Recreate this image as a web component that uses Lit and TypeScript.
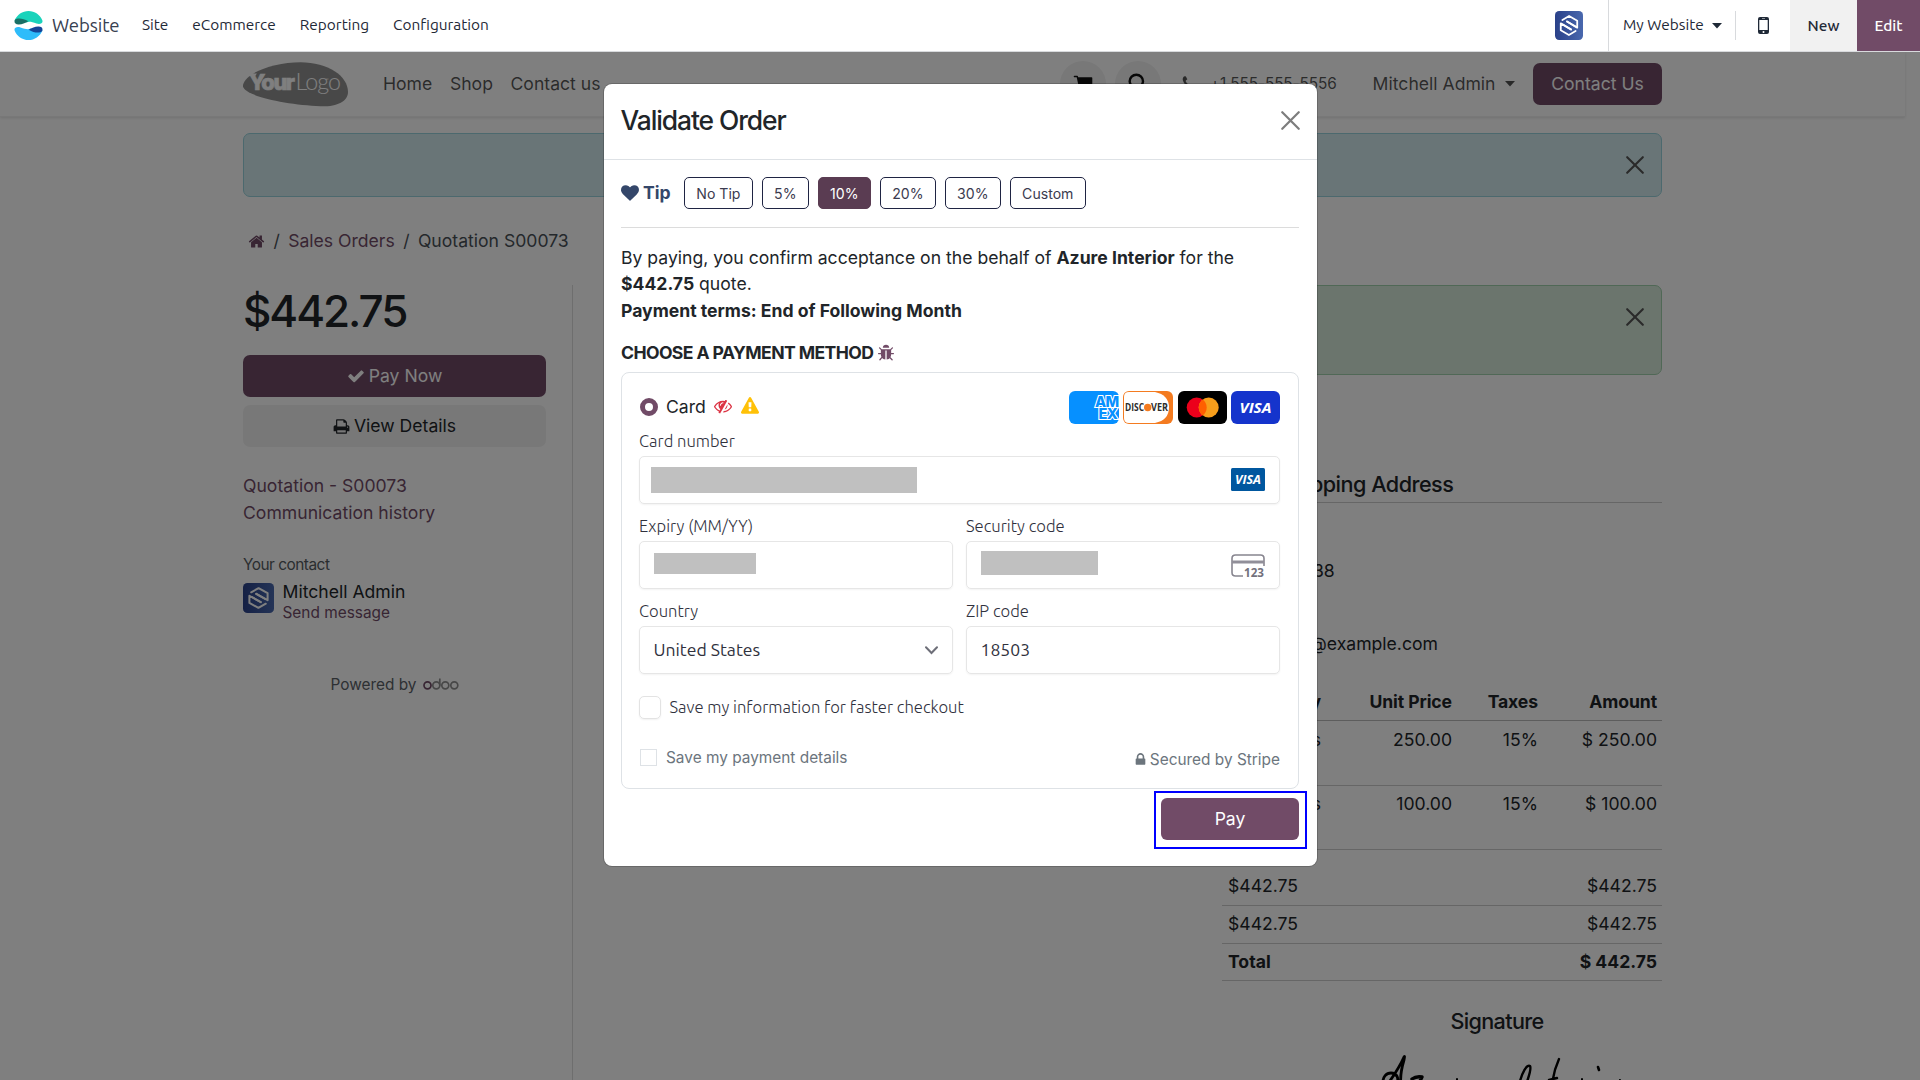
import { LitElement, html, css } from "lit";
import { customElement } from "lit/decorators.js";
import { classMap } from "lit/directives/class-map.js";

const GLYPHS: Record<string, string> = {
  home: "M1472 992v480q0 26-19 45t-45 19h-384v-384h-256v384h-384q-26 0-45-19t-19-45v-480q0-1 .5-3t.5-3l575-474 575 474q1 2 1 6zm223-69l-62 74q-8 9-21 11h-3q-13 0-21-7l-692-577-692 577q-12 8-24 7-13-2-21-11l-62-74q-8-10-7-23.5t11-21.5l719-599q32-26 76-26t76 26l244 204v-195q0-14 9-23t23-9h192q14 0 23 9t9 23v408l219 182q10 8 11 21.5t-7 23.5z",
  check: "M1671 566q0 40-28 68l-724 724-136 136q-28 28-68 28t-68-28l-136-136-362-362q-28-28-28-68t28-68l136-136q28-28 68-28t68 28l294 295 656-657q28-28 68-28t68 28l136 136q28 28 28 68z",
  heart: "M896 1664q-26 0-44-18l-624-602q-10-8-27.5-26t-55.5-65.5-68-97.5-53.5-121-23.5-138q0-220 127-344t351-124q62 0 126.5 21.5t120 58 95.5 68.5 76 68q36-36 76-68t95.5-68.5 120-58 126.5-21.5q224 0 351 124t127 344q0 221-229 450l-623 600q-18 18-44 18z",
  print: "M448 1536h896v-256h-896v256zm0-640h896v-384h-160q-40 0-68-28t-28-68v-160h-640v640zm1152 64q0-26-19-45t-45-19-45 19-19 45 19 45 45 19 45-19 19-45zm128 0v416q0 13-9.5 22.5t-22.5 9.5h-224v160q0 40-28 68t-68 28h-960q-40 0-68-28t-28-68v-160h-224q-13 0-22.5-9.5t-9.5-22.5v-416q0-79 56.5-135.5t135.5-56.5h64v-544q0-40 28-68t68-28h672q40 0 88 20t76 48l152 152q28 28 48 76t20 88v256h64q79 0 135.5 56.5t56.5 135.5z",
  lock: "M640 768h512v-192q0-106-75-181t-181-75-181 75-75 181v192zm832 96v576q0 40-28 68t-68 28h-960q-40 0-68-28t-28-68v-576q0-40 28-68t68-28h32v-192q0-184 132-316t316-132 316 132 132 316v192h32q40 0 68 28t28 68z",
  warning: "M1024 1375v-190q0-14-9.5-23.5t-22.5-9.5h-192q-13 0-22.5 9.5t-9.5 23.5v190q0 14 9.5 23.5t22.5 9.5h192q13 0 22.5-9.5t9.5-23.5zm-2-374l18-459q0-12-10-19-13-11-24-11h-220q-11 0-24 11-10 7-10 21l17 457q0 10 10 16.5t24 6.5h185q14 0 23.5-6.5t10.5-16.5zm-14-934l768 1408q35 63-2 126-17 29-46.5 46t-63.5 17h-1536q-34 0-63.5-17t-46.5-46q-37-63-2-126l768-1408q17-31 47-49t65-18 65 18 47 49z",
  unseen: "M555 1335l78-141q-87-63-136-159t-49-203q0-121 61-225-229 117-381 353 167 258 427 375zm389-759q0-20-14-34t-34-14q-125 0-214.5 89.5t-89.5 214.5q0 20 14 34t34 14 34-14 14-34q0-86 61-147t147-61q20 0 34-14t14-34zm363-191q0 7-1 9-106 189-316 567t-315 566l-49 89q-10 16-28 16-12 0-134-70-16-10-16-28 0-12 44-87-143-65-263.5-173t-208.5-245q-20-31-20-69t20-69q153-235 380-371t496-136q89 0 180 17l54-97q10-16 28-16 5 0 18 6t31 15.5 33 18.5 31.5 18.5 19.5 11.5q16 10 16 27zm37 447q0 139-79 253.5t-209 164.5l280-502q8 45 8 84zm448 128q0 35-20 69-39 64-109 145-150 172-347.5 267t-419.5 95l74-132q212-18 392.5-137t301.5-307q-115-179-282-294l63-112q95 64 182.5 153t144.5 184q20 34 20 69z",
  bug: "M1696 960q0 26-19 45t-45 19h-224q0 171-67 290l208 209q19 19 19 45t-19 45q-18 19-45 19t-45-19l-198-197q-5 5-15 13t-42 28.5-65 36.5-82 29-97 13v-896h-128v896q-51 0-101.5-13.5t-87-33-66-39-43.5-32.5l-15-14-183 207q-20 21-48 21-24 0-43-16-19-18-20.5-44.5t15.5-46.5l202-227q-58-114-58-274h-224q-26 0-45-19t-19-45 19-45 45-19h224v-294l-173-173q-19-19-19-45t19-45 45-19 45 19l173 173h844l173-173q19-19 45-19t45 19 19 45-19 45l-173 173v294h224q26 0 45 19t19 45zm-480-576h-640q0-133 93.5-226.5t226.5-93.5 226.5 93.5 93.5 226.5z",
  cart: "M1728 448v512q0 24-16.5 42.5t-40.5 21.5l-1044 122q13 60 13 70 0 16-24 64h920q26 0 45 19t19 45-19 45-45 19h-1024q-26 0-45-19t-19-45q0-11 8-31.5t16-36 21.5-40 15.5-29.5l-177-823h-204q-26 0-45-19t-19-45 19-45 45-19h256q16 0 28.5 6.5t19.5 15.5 13 24.5 8 26 5.5 29.5 4.5 26h1201q26 0 45 19t19 45z",
  phone: "M1600 1240q0 27-10 70.5t-21 68.5q-21 50-122 106-94 51-186 51-27 0-53-3.5t-57.5-12.5-47-14.5-55.5-20.5-49-18q-98-35-175-83-127-79-264-216t-216-264q-48-77-83-175-3-9-18-49t-20.5-55.5-14.5-47-12.5-57.5-3.5-53q0-92 51-186 56-101 106-122 25-11 68.5-21t70.5-10q14 0 21 3 18 6 53 76 11 19 30 54t35 63.5 31 53.5q3 4 17.5 25t21.5 35.5 7 28.5q0 20-28.5 50t-62 55-62 53-28.5 46q0 9 5 22.5t8.5 20.5 14 24 11.5 19q76 137 174 235t235 174q2 1 19 11.5t24 14 20.5 8.5 22.5 5q18 0 46-28.5t53-62 55-62 50-28.5q14 0 28.5 7t35.5 21.5 25 17.5q25 15 53.5 31t63.5 35 54 30q70 35 76 53 3 7 3 21z",
};

const glyph = (name: string, size: number) => html`<svg class="ico" width=${size} height=${size} viewBox="0 0 1792 1792"><path fill="currentColor" d=${GLYPHS[name]} /></svg>`;

const cross = (size: number) => html`<svg class="ico" width=${size} height=${size} viewBox="0 0 18 18"><path d="M1.2 1.2l15.6 15.6M16.8 1.2L1.2 16.8" fill="none" stroke="currentColor" stroke-width="2.1" stroke-linecap="round" /></svg>`;

const caret = html`<svg class="ico" width="10" height="6" viewBox="0 0 10 6"><path d="M0 0h10L5 5.6z" fill="currentColor" /></svg>`;

const companyMark = (w: number, h: number) => html`<svg class="ico" width=${w} height=${h} viewBox="0 0 31 31" preserveAspectRatio="none">
  <defs><linearGradient id="mk" x1="0" y1="0" x2="1" y2="0"><stop offset="0" stop-color="#2a4189" /><stop offset="1" stop-color="#4968ae" /></linearGradient></defs>
  <rect width="31" height="31" rx="4.5" fill="url(#mk)" />
  <g fill="none" stroke="#fff" stroke-width="2" stroke-linejoin="round" stroke-linecap="round">
    <path d="M8.2 9.6L15.6 5.3l9 5.1v7.4L13.2 11.2" /><path d="M22.8 21.4l-7.4 4.3-9-5.1v-7.4l11.4 6.6" /><path d="M13.4 11.2l9.2 5.4M8.6 14.4l9 5.2" />
  </g></svg>`;

@customElement("app-navbar")
class AppNavbar extends LitElement {
  static styles = css`
    :host { display: flex; height: 51px; border-bottom: 1px solid #d8dadd; background: #fff; font: 15px "Ubuntu", "Noto Sans", sans-serif; color: #1f2937; }
    .ico { display: block; flex: none; }
    .brand { display: flex; align-items: center; gap: 9px; padding: 0 0 1px 14px; width: 115px; white-space: nowrap; }
    .brand b { font-weight: 400; font-size: 18.6px; letter-spacing: -0.1px; color: #374151; }
    .menu { display: flex; align-items: center; margin: 0 0 3px 13px; gap: 24px; white-space: nowrap; font-size: 15.4px; }
    .grow { flex: 1; }
    .who { display: flex; align-items: center; padding-right: 25px; }
    .site { display: flex; align-items: center; border-left: 1px solid #d8dadd; padding: 0 0 2px 14px; gap: 8px; width: 112px; white-space: nowrap; font-size: 15.4px; }
    .site .ico { margin-top: 2px; }
    .phone { display: flex; align-items: center; justify-content: center; border-left: 1px solid #d8dadd; height: 29px; align-self: center; width: 54px; }
    .btn { display: flex; align-items: center; justify-content: center; font-weight: 500; font-size: 15.4px; box-sizing: border-box; }
    .new { width: 67px; background: #f1f1f1; }
    .edit { width: 63px; background: #714b67; color: #fff; }
  `;
  render() {
    return html`
      <div class="brand">
        <svg class="ico" width="29" height="29" viewBox="0 0 29 29">
          <path d="M.5 9.8C3 3.6 8.4 0 14.5 0c6.300 0 11.6 3.800 13.800 9.300C29.400 12.400 26 13.600 22.500 12.500 18 11 15 10.300 12.500 11.400Z" fill="#1ad3bb" />
          <path d="M.9 8.700C3.500 6.600 9 7 14.300 10.300 11 12.200 8 13.600 4.500 13.500 1 13.400-.2 11.500.9 8.700Z" fill="#1a6f66" />
          <path d="M28.500 19.200C26 25.400 20.600 29 14.500 29 8.200 29 2.900 25.200.7 19.700-.4 16.600 3 15.400 6.500 16.500 11 18 14 18.700 16.500 17.600Z" fill="#2ebcfa" />
          <path d="M28.100 20.300C25.500 22.400 20 22 14.700 18.700 18 16.800 21 15.400 24.500 15.500 28 15.600 29.200 17.500 28.100 20.300Z" fill="#144496" />
        </svg><b>Website</b>
      </div>
      <div class="menu"><span>Site</span><span>eCommerce</span><span>Reporting</span><span>Configuration</span></div>
      <div class="grow"></div>
      <div class="who">${companyMark(28, 29)}</div>
      <div class="site"><span>My Website</span>${caret}</div>
      <div class="phone"><svg class="ico" width="11" height="17" viewBox="0 0 11 17"><path fill="#1f2937" fill-rule="evenodd" d="M2 0h7q2 0 2 2v13q0 2-2 2H2q-2 0-2-2V2Q0 0 2 0zM1.300 3v10h8.400V3zM4 1.200v.6h3v-.6zM5.500 14a1 1 0 100 2 1 1 0 000-2z" /></svg></div>
      <div class="btn new">New</div>
      <div class="btn edit">Edit</div>
    `;
  }
}

@customElement("site-page")
class SitePage extends LitElement {
  static styles = css`
    :host { display: block; width: 1905px; background: #fff; color: #212529; font: 17.6px/26.4px "Inter", sans-serif; }
    .ico { display: block; flex: none; }
    .header { display: flex; align-items: center; height: 64px; padding: 0 243px; border-bottom: 1px solid #f1f1f1; box-shadow: 0 1px 3px rgba(0, 0, 0, .12); color: rgba(0, 0, 0, .68); white-space: nowrap; }
    .links { display: flex; gap: 17.6px; margin-left: 35px; }
    .grow { flex: 1; }
    .round { width: 46px; height: 46px; border-radius: 50%; background: #f0f0f0; color: #111; display: flex; align-items: center; justify-content: center; margin-right: 8.500px; }
    .round .ico { margin-top: -2px; }
    .tel { display: flex; align-items: center; gap: 13px; margin: 0 36px 0 12px; font-size: 15.4px; letter-spacing: -.14px; }
    .tel .ico { margin-top: -2px; }
    .user { display: flex; align-items: center; gap: 9.500px; margin-right: 18px; }
    .cta { width: 129px; height: 42px; border-radius: 7px; background: #714b67; color: #fff; display: flex; align-items: center; justify-content: center; }
    .content { padding: 16px 243px 0; }
    .alert { box-sizing: border-box; height: 64px; border: 1px solid #98d2dc; border-radius: 7px; background: #d3ebee; display: flex; align-items: center; justify-content: flex-end; padding-right: 17px; color: #555; }
    .alert.ok { height: 90px; background: #d6eada; border-color: #a0d0ac; padding-bottom: 26px; }
    .crumbs { display: flex; gap: 8.4px; height: 26px; margin: 31px 0 31px; padding-left: 5px; color: #495057; align-items: center; white-space: nowrap; }
    .crumbs .lnk { color: #714b67; }
    .cols { display: flex; height: 795px; }
    .side { width: 303px; padding-right: 26px; border-right: 1px solid #dcdcdc; white-space: nowrap; }
    .price { font-size: 44px; line-height: 52px; font-weight: 500; letter-spacing: -2.05px; margin-bottom: 18px; }
    .act { height: 42px; border-radius: 7px; display: flex; align-items: center; justify-content: center; gap: 4px; margin-bottom: 8px; background: #714b67; color: #fff; }
    .act.alt { background: #f1f1f1; color: #212529; }
    .nav { margin-top: 25px; color: #714b67; line-height: 27px; }
    .small { font-size: 15.4px; line-height: 20px; }
    .muted { color: #555b61; margin-top: 29px; letter-spacing: -.5px; }
    .contact { display: flex; gap: 8.500px; margin-top: 5px; align-items: flex-start; }
    .contact .ico { margin-top: 3px; }
    .contact .lnk { color: #714b67; }
    .contact .nm { line-height: 21px; margin: 1px 0; }
    .powered { display: flex; justify-content: center; align-items: baseline; gap: 6px; margin-top: 49px; color: #5b6167; font-size: 15.4px; }
    .powered svg { margin-bottom: -1px; }
    .main { flex: 1; padding-left: 35px; }
    .ship { margin: 97px 0 0; padding-left: 658px; }
    .ship h3 { font-size: 21.6px; line-height: 25px; font-weight: 500; letter-spacing: -.5px; margin: 0; padding: 0 0 5px 13px; border-bottom: 1px solid #ccc; white-space: nowrap; }
    .ship p { margin: 55px 0 0 14px; }
    .ship p + p { margin: 47px 0 0 -15px; }
    .grid { display: grid; grid-template-columns: 718px 131px 86px 1fr; margin-top: 30px; text-align: right; }
    .grid > div { box-sizing: border-box; height: 64px; padding: 5px 5px 0 0; border-bottom: 1px solid #ccc; white-space: nowrap; }
    .grid > .h { height: 33px; padding-top: 1px; font-weight: 700; letter-spacing: -.1px; border-color: #bbb; }
    .grid > .r1 { height: 65px; padding-top: 6px; }
    .totals { width: 440px; margin: 18px 0 0 auto; }
    .totals div { box-sizing: border-box; display: flex; justify-content: space-between; height: 38px; padding: 5px 5px 0 6px; border-bottom: 1px solid #ccc; }
    .totals div.b { font-weight: 700; height: 37px; }
    .sign { width: 330px; margin: 26px 0 0 auto; font-weight: 500; font-size: 21.6px; letter-spacing: -.65px; text-align: center; line-height: 28px; }
    .ink { display: block; width: 330px; height: 34px; margin: 19px 0 0 auto; }
  `;
  render() {
    return html`
      <div class="header">
        <svg class="ico logo" width="105" height="45" viewBox="0 0 106 45">
          <path d="M0 23C3 10 32 0 58 0c28 0 48 14 48 30 0 10-12 15-28 14.500C44 43-2 34 0 23z" fill="#919191" />
          <path d="M4 11.500h10l-2 3-5-1z" fill="#fff" />
          <text x="6" y="28" font-family="Inter" font-weight="800" font-size="22" letter-spacing="-1.500" fill="#fff" stroke="#fff" stroke-width=".7" textLength="45">Your</text>
          <text x="53" y="28" font-family="Lato" font-weight="300" font-size="23.500" fill="#fff" textLength="46">Logo</text>
        </svg>
        <div class="links"><span>Home</span><span>Shop</span><span>Contact us</span></div>
        <div class="grow"></div>
        <div class="round">${glyph("cart", 20)}</div>
        <div class="round"><svg class="ico" width="20" height="20" viewBox="0 0 18 18"><g fill="none" stroke="currentColor" stroke-width="2.200"><circle cx="7.500" cy="7.500" r="6" /><path d="M12 12l5 5" /></g></svg></div>
        <div class="tel">${glyph("phone", 16)}<span>+1 555-555-5556</span></div>
        <div class="user"><span>Mitchell Admin</span>${caret}</div>
        <div class="cta">Contact Us</div>
      </div>
      <div class="content">
        <div class="alert">${cross(18)}</div>
        <div class="crumbs"><span class="lnk">${glyph("home", 17)}</span><span>/</span><span class="lnk">Sales Orders</span><span>/</span><span>Quotation S00073</span></div>
        <div class="cols">
          <div class="side">
            <div class="price">$442.75</div>
            <div class="act">${glyph("check", 18)}Pay Now</div>
            <div class="act alt">${glyph("print", 17)}View Details</div>
            <div class="nav">Quotation - S00073<br />Communication history</div>
            <div class="small muted">Your contact</div>
            <div class="contact">${companyMark(31, 30)}<div><div class="nm">Mitchell Admin</div><div class="small lnk">Send message</div></div></div>
            <div class="powered"><span>Powered by</span>
              <svg width="36" height="12" viewBox="0 0 36 12"><g fill="none" stroke="#8f8f8f" stroke-width="1.700"><circle cx="4.500" cy="7.300" r="3.500" stroke="#714b67" /><circle cx="13.300" cy="7.300" r="3.500" /><path d="M16.800 7.500V.5" /><circle cx="22.300" cy="7.300" r="3.500" /><circle cx="31.300" cy="7.300" r="3.500" /></g></svg>
            </div>
          </div>
          <div class="main">
            <div class="alert ok">${cross(18)}</div>
            <div class="ship"><h3>Shipping Address</h3><p>94538</p><p>interior@example.com</p></div>
            <div class="grid">
              <div class="h">Quantity</div><div class="h">Unit Price</div><div class="h">Taxes</div><div class="h">Amount</div>
              <div class="r1">1.00 Units</div><div class="r1">250.00</div><div class="r1">15%</div><div class="r1">$ 250.00</div>
              <div>1.00 Units</div><div>100.00</div><div>15%</div><div>$ 100.00</div>
            </div>
            <div class="totals">
              <div><span>$442.75</span><span>$442.75</span></div>
              <div><span>$442.75</span><span>$442.75</span></div>
              <div class="b"><span>Total</span><span>$ 442.75</span></div>
            </div>
            <div class="sign">Signature</div>
            <svg class="ink" viewBox="0 0 330 34"><g fill="none" stroke="#000" stroke-linecap="round" stroke-linejoin="round">
              <path d="M51 31C50 22 55 19 59 19c6 0 8 5 6 11M55 31C63 20 68 12 72 3q1-2 0 3C69 16 68 24 69 31" stroke-width="2.800" />
              <path d="M80 25q4-3 10-2l-4 8" stroke-width="3.400" /><path d="M125 25v6M250 25v6M288 26l2 4" stroke-width="2" />
              <path d="M187 31C190 18 195 10 198 12c2 3-2 12-4 19" stroke-width="2.400" />
              <path d="M227 5C223 14 221 22 220 31M217 26l8-2" stroke-width="2.400" /><path d="M266 13l1 3" stroke-width="2.600" />
            </g></svg>
          </div>
        </div>
      </div>
    `;
  }
}

@customElement("order-dialog")
class OrderDialog extends LitElement {
  static styles = css`
    :host { display: block; box-sizing: border-box; width: 713px; height: 782px; background: #fff; border-radius: 8px; box-shadow: 0 0 0 1px rgba(0, 0, 0, .18); color: #212529; font: 17.6px/26.4px "Inter", sans-serif; }
    .ico { display: block; flex: none; }
    .head { box-sizing: border-box; height: 76px; padding: 0 17.500px 3px 17px; display: flex; align-items: center; justify-content: space-between; border-bottom: 1px solid #dee2e6; }
    .head h4 { margin: 0 0 0 -.5px; font-size: 26.4px; font-weight: 500; letter-spacing: -1.07px; }
    .head .ico { color: #7d7d7d; margin-top: 1px; }
    .body { padding: 17px 18px 0 17px; }
    .tips { display: flex; align-items: center; height: 32px; gap: 9px; margin-bottom: 18px; }
    .label { display: flex; align-items: center; gap: 4px; width: 54px; font-weight: 700; color: #34476a; white-space: nowrap; }
    .tip { box-sizing: border-box; height: 32px; border: 1px solid #1f2443; border-radius: 5px; padding: 0 11.300px; font-size: 14.1px; line-height: 31px; color: #3b3b4f; white-space: nowrap; }
    .tip.on { background: #5a3c52; border-color: #5a3c52; color: #fff; }
    .rule { height: 1px; background: #dcdcdc; margin-bottom: 17px; }
    p { margin: 0; }
    b { font-weight: 700; }
    .choose { display: flex; align-items: center; gap: 4px; margin: 16px 0 5px; font-weight: 700; letter-spacing: -.6px; white-space: nowrap; }
    .choose .ico { color: #714b67; }
    .panel { box-sizing: border-box; height: 417px; border: 1px solid #dee2e6; border-radius: 8px; padding: 18px 18px 0 17px; }
    .method { display: flex; align-items: center; height: 33px; margin-bottom: 6px; }
    .radio { box-sizing: border-box; width: 18px; height: 18px; border: 5.500px solid #714b67; border-radius: 50%; margin: 0 8px 0 1px; }
    .flags { display: flex; gap: 8.500px; margin: 0 auto 2px 8.500px; }
    .flags .r { color: #dc3545; } .flags .y { color: #ffc107; }
    .brands { display: flex; gap: 4.300px; }
    .stripe { font-family: "Ubuntu", "Noto Sans", sans-serif; font-weight: 300; font-size: 16.6px; line-height: 22px; color: #30313d; display: grid; grid-template-columns: 1fr 1fr; column-gap: 13px; row-gap: 11px; white-space: nowrap; }
    .wide { grid-column: 1 / 3; }
    .field { box-sizing: border-box; height: 48px; margin-top: 4px; border: 1px solid #e6e6e6; border-radius: 5px; box-shadow: 0 1px 2px rgba(0, 0, 0, .05); padding: 0 14px 0 13.500px; display: flex; align-items: center; justify-content: space-between; font-size: 17.6px; font-weight: 400; }
    .wide .field { padding-left: 11px; }
    .mask { background: #c0c0c0; }
    .m1 { width: 266px; height: 26px; } .m2 { width: 102px; height: 21px; margin-bottom: 2px; } .m3 { width: 117px; height: 24px; margin-bottom: 4px; }
    .cvc { margin-top: 2px; overflow: visible; }
    .down { margin-top: 2px; }
    .tick { display: flex; align-items: center; gap: 8.500px; height: 22px; margin-top: 12px; }
    .tick span { margin-top: -2px; }
    .box { box-sizing: border-box; width: 22px; height: 23px; border: 1px solid #e3e3e3; border-radius: 5px; box-shadow: 0 1px 2px rgba(0, 0, 0, .06); }
    .foot { display: flex; justify-content: space-between; height: 24px; margin-top: 28px; font-size: 15.4px; line-height: 22px; color: #6c757d; }
    .foot span { display: flex; align-items: center; gap: 9px; white-space: nowrap; height: 22px; }
    .foot .sec { gap: 2px; padding-top: 2px; }
    .sq { box-sizing: border-box; width: 17px; height: 17px; border: 1px solid #dee2e6; margin-left: 1px; }
    .payrow { display: flex; justify-content: flex-end; margin: 2px -8px 0 0; }
    .ring { box-sizing: border-box; width: 153px; height: 58px; border: 2px solid #00f; padding: 5px 0 0 5px; }
    .pay { width: 138px; height: 42px; border-radius: 6px; background: #714b67; color: #fff; text-align: center; line-height: 41px; }
  `;
  private tips = ["No Tip", "5%", "10%", "20%", "30%", "Custom"];
  private visa(w: number, h: number, fill: string, rx: number, fs: number, len: number) {
    return html`<svg class="ico" width=${w} height=${h} viewBox="0 0 ${w} ${h}"><rect width=${w} height=${h} rx=${rx} fill=${fill} /><text x=${(w - len) / 2} y=${h / 2 + fs * 0.36} textLength=${len} lengthAdjust="spacingAndGlyphs" font-family="Open Sans" font-weight="700" font-style="italic" font-size=${fs} fill="#fff">VISA</text></svg>`;
  }
  render() {
    return html`
      <div class="head"><h4>Validate Order</h4>${cross(19)}</div>
      <div class="body">
        <div class="tips">
          <div class="label">${glyph("heart", 18)}Tip</div>
          ${this.tips.map((t) => html`<div class=${classMap({ tip: true, on: t === "10%" })}>${t}</div>`)}
        </div>
        <div class="rule"></div>
        <p>By paying, you confirm acceptance on the behalf of <b>Azure Interior</b> for the <b>$442.75</b> quote.<br /><b>Payment terms: End of Following Month</b></p>
        <div class="choose">CHOOSE A PAYMENT METHOD ${glyph("bug", 18)}</div>
        <div class="panel">
          <div class="method">
            <div class="radio"></div><span>Card</span>
            <div class="flags"><span class="r">${glyph("unseen", 18)}</span><span class="y">${glyph("warning", 18)}</span></div>
            <div class="brands">
              <svg class="ico" width="50" height="33" viewBox="0 0 50 33"><rect width="50" height="33" rx="6" fill="#0690ff" /><text font-family="Inter" font-weight="800" font-size="14.500" fill="#0690ff" stroke="#fff" stroke-width="2.200" paint-order="stroke" letter-spacing="-.6"><tspan x="26" y="16">AM</tspan><tspan x="29.500" y="27.500">EX</tspan></text></svg>
              <svg class="ico" width="50" height="33" viewBox="0 0 50 33"><rect width="50" height="33" rx="6" fill="#f47b20" /><path d="M6 1h26q14 3 14 15.500T32 32H6q-5 0-5-5V6q0-5 5-5z" fill="#fff" /><g font-family="Open Sans" font-weight="700" font-size="10" fill="#2d2d2d"><text x="2" y="20" textLength="19" lengthAdjust="spacingAndGlyphs">DISC</text><text x="28" y="20" textLength="17" lengthAdjust="spacingAndGlyphs">VER</text></g><circle cx="24.700" cy="16.500" r="3.700" fill="#f47b20" /></svg>
              <svg class="ico" width="49" height="33" viewBox="0 0 49 33"><rect width="49" height="33" rx="6" /><circle cx="18.700" cy="16.500" r="10" fill="#eb001b" /><circle cx="30.700" cy="16.500" r="10" fill="#f79e1b" /><path d="M24.700 8.500a10 10 0 010 16 10 10 0 010-16z" fill="#ff5f00" /></svg>
              ${this.visa(49, 33, "#1534cc", 6, 14.5, 32)}
            </div>
          </div>
          <div class="stripe">
            <div class="wide">Card number<div class="field"><div class="mask m1"></div>${this.visa(34, 23, "#00579f", 1.5, 12.2, 26)}</div></div>
            <div>Expiry (MM/YY)<div class="field"><div class="mask m2"></div></div></div>
            <div>Security code<div class="field"><div class="mask m3"></div>
              <svg class="ico cvc" width="34" height="23" viewBox="0 0 34 23"><path d="M33 12V4.500Q33 1 29.500 1h-25Q1 1 1 4.500v14Q1 22 4.500 22H12" fill="none" stroke="#87858f" stroke-width="1.600" /><rect x="1" y="6.500" width="32" height="3" fill="#918f99" /><text x="13" y="22.800" font-family="Open Sans" font-weight="700" font-size="11.500" fill="#73717c" textLength="20" lengthAdjust="spacingAndGlyphs">123</text></svg></div></div>
            <div>Country<div class="field">United States<svg class="ico down" width="13" height="9" viewBox="0 0 13 9"><path d="M1 1.300l5.500 5.700L12 1.300" fill="none" stroke="#6d6e78" stroke-width="2" stroke-linecap="round" /></svg></div></div>
            <div>ZIP code<div class="field">18503</div></div>
            <div class="wide tick"><div class="box"></div><span>Save my information for faster checkout</span></div>
          </div>
          <div class="foot"><span><i class="sq"></i>Save my payment details</span><span class="sec">${glyph("lock", 15)}Secured by Stripe</span></div>
        </div>
        <div class="payrow"><div class="ring"><div class="pay">Pay</div></div></div>
      </div>
    `;
  }
}

@customElement("app-root")
class AppRoot extends LitElement {
  static styles = css`
    :host { display: block; width: 1920px; height: 1080px; overflow: hidden; background: #fff; }
    .stage { position: relative; height: 1028px; overflow: hidden; }
    .dim { position: absolute; inset: 0; background: rgba(0, 0, 0, .5); }
    order-dialog { position: absolute; left: 604px; top: 32px; }
  `;
  render() {
    return html`<app-navbar></app-navbar>
      <div class="stage"><site-page></site-page><div class="dim"></div><order-dialog></order-dialog></div>`;
  }
}
